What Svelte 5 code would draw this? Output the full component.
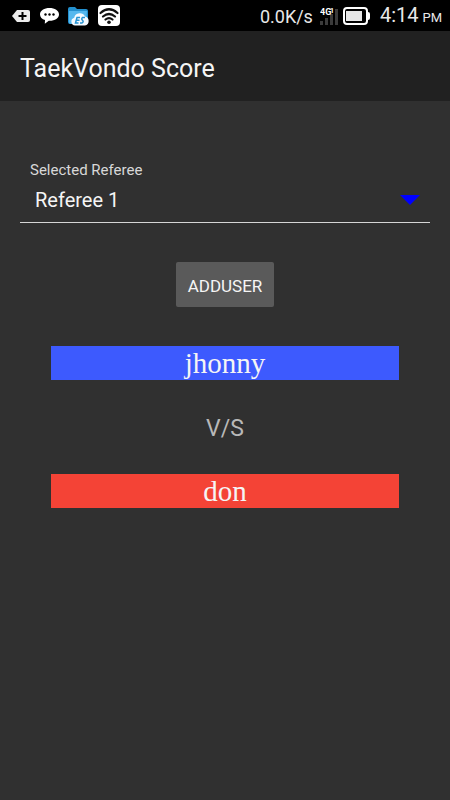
<script>
  let referee = $state("Referee 1");
  const referees = ["Referee 1", "Referee 2", "Referee 3", "Referee 4"];
  const players = { blue: "jhonny", red: "don" };
</script>

<div class="statusbar">
  <div class="notifications">
    <svg width="19" height="14" viewBox="0 0 19 14" aria-hidden="true">
      <path d="M5 1h11q2 0 2 2v8q0 2-2 2H5L0 7z" fill="#ececec" />
      <path d="M10.500 3v8M6.500 7h8" stroke="#000" stroke-width="2" />
    </svg>
    <svg width="19" height="16" viewBox="0 0 19 16" aria-hidden="true">
      <path d="M9.500 0C4.300 0 0 2.700 0 6.400c0 2.600 2 4.600 5 5.600l-.2 3.800 4-3.100c5.800.3 10.200-2.600 10.200-6.300C19 2.700 14.700 0 9.500 0z" fill="#fff" />
      <circle cx="5.500" cy="6.500" r="1.200" />
      <circle cx="9.500" cy="6.500" r="1.200" />
      <circle cx="13.500" cy="6.500" r="1.200" />
    </svg>
    <svg width="21" height="20" viewBox="0 0 21 20" aria-hidden="true">
      <path d="M0 3q0-2 2-2h5l2 2h9q2 0 2 2v11q0 2-2 2H2q-2 0-2-2z" fill="#2390cf" />
      <path d="M1 5h18l-1 11q0 2-2 2H3q-2 0-2-2z" fill="#55b8ee" />
      <path d="M7 19.500a4 4 0 0 1-.8-7.800A5.800 5.800 0 0 1 17 10.500a4.600 4.600 0 0 1 0 9z" fill="#f4faff" />
      <path d="M12 11.500H9L7.500 17h3M8.500 14.200h3M17 11.500h-2.500q-1.500 1.400 0 2.700t-.5 2.800h-2" fill="none" stroke="#2492d2" stroke-width="1.500" />
    </svg>
    <svg width="22" height="21" viewBox="0 0 22 21" aria-hidden="true">
      <rect width="22" height="21" rx="4" fill="#fff" />
      <path d="M2.500 8Q11 .5 19.500 8M5 11.500q6-5 12 0M7.500 14.500q3.500-2.700 7 0" fill="none" stroke="#111" stroke-width="2.200" stroke-linecap="round" />
      <circle cx="11" cy="17.300" r="1.800" fill="#111" />
    </svg>
  </div>
  <span class="speed">0.0K/s</span>
  <svg class="signal" width="19" height="20" viewBox="0 0 19 20" aria-hidden="true">
    <path d="M0 15h3v4H0zM5 12h3v7H5zM10 8h3v11h-3zM15 3h3v16h-3z" fill="#3b3b3b" />
    <text x="0" y="9" font-size="9" font-weight="700" fill="#fff">4G</text>
    <text x="10" y="7" font-size="7" font-weight="700" fill="#fff">1</text>
  </svg>
  <svg width="28" height="18" viewBox="0 0 28 18" aria-hidden="true">
    <rect x="1" y="1" width="23" height="16" rx="3" fill="none" stroke="#fff" stroke-width="2" />
    <path d="M25 5q2 0 2 2v4q0 2-2 2z" fill="#fff" />
    <rect x="3" y="4" width="16" height="10" fill="#e6e6e6" />
  </svg>
  <time>4:14 <small>PM</small></time>
</div>

<header>
  <h1>TaekVondo Score</h1>
</header>

<main>
  <div class="field">
    <label for="referee">Selected Referee</label>
    <div class="picker">
      <select id="referee" bind:value={referee}>
        {#each referees as name}
          <option>{name}</option>
        {/each}
      </select>
      <svg width="20" height="10" viewBox="0 0 20 10" aria-hidden="true">
        <path d="M0 0h20L10 10z" fill="#00f" />
      </svg>
    </div>
  </div>

  <button type="button">ADDUSER</button>

  <section>
    <div class="player blue">{players.blue}</div>
    <p>V/S</p>
    <div class="player red">{players.red}</div>
  </section>
</main>

<style>
  :global(body) {
    margin: 0;
    background: #303030;
    color: #fff;
    font-family: Roboto, sans-serif;
  }

  .statusbar {
    display: flex;
    align-items: center;
    height: 31px;
    padding: 0 8px 0 12px;
    background: #000;
    color: #e8e8e8;
    white-space: nowrap;
  }

  .notifications {
    display: flex;
    align-items: center;
    gap: 9px;
    margin-right: auto;
  }

  .speed {
    padding-top: 2px;
    font-size: 18px;
    line-height: 30px;
  }

  .signal {
    margin: 0 4px 0 7px;
  }

  time {
    margin-left: 9px;
    padding-top: 2px;
    font-size: 20px;
    line-height: 30px;
  }

  small {
    margin-left: -1px;
    font-size: 13px;
  }

  header {
    display: flex;
    align-items: center;
    box-sizing: border-box;
    height: 70px;
    padding: 5px 20px 0;
    background: #212121;
  }

  h1 {
    margin: 0;
    font-size: 25px;
    line-height: 32px;
    font-weight: 400;
    color: #f5f5f5;
  }

  main {
    display: flex;
    flex-direction: column;
    align-items: center;
    padding: 60px 20px;
  }

  .field {
    width: 100%;
    border-bottom: 1px solid #d6d6d6;
  }

  label {
    display: block;
    padding-left: 10px;
    font-size: 15px;
    line-height: 18px;
    color: #d8d8d8;
  }

  .picker {
    position: relative;
  }

  .picker svg {
    position: absolute;
    top: 16px;
    right: 10px;
    pointer-events: none;
  }

  select {
    display: block;
    appearance: none;
    width: 100%;
    height: 43px;
    padding: 0 40px 2px 15px;
    border: 0;
    background: transparent;
    color: #f5f5f5;
    font: 20px Roboto, sans-serif;
  }

  option {
    background: #303030;
  }

  button {
    margin: 39px 0;
    padding: 2px 12px 0;
    height: 45px;
    border: 0;
    border-radius: 2px;
    background: #5a5a5a;
    color: #f5f5f5;
    font: 17px Roboto, sans-serif;
  }

  section {
    align-self: stretch;
    padding: 0 31px;
    text-align: center;
  }

  .player {
    height: 34px;
    font-family: "Liberation Serif", serif;
    font-size: 29px;
    line-height: 34px;
    color: #f5f5f5;
  }

  .blue {
    background: #3d5afe;
  }

  .red {
    background: #f44336;
  }

  p {
    margin: 34px 0 30px;
    font-size: 23px;
    line-height: 30px;
    color: #b8b8b8;
  }
</style>
